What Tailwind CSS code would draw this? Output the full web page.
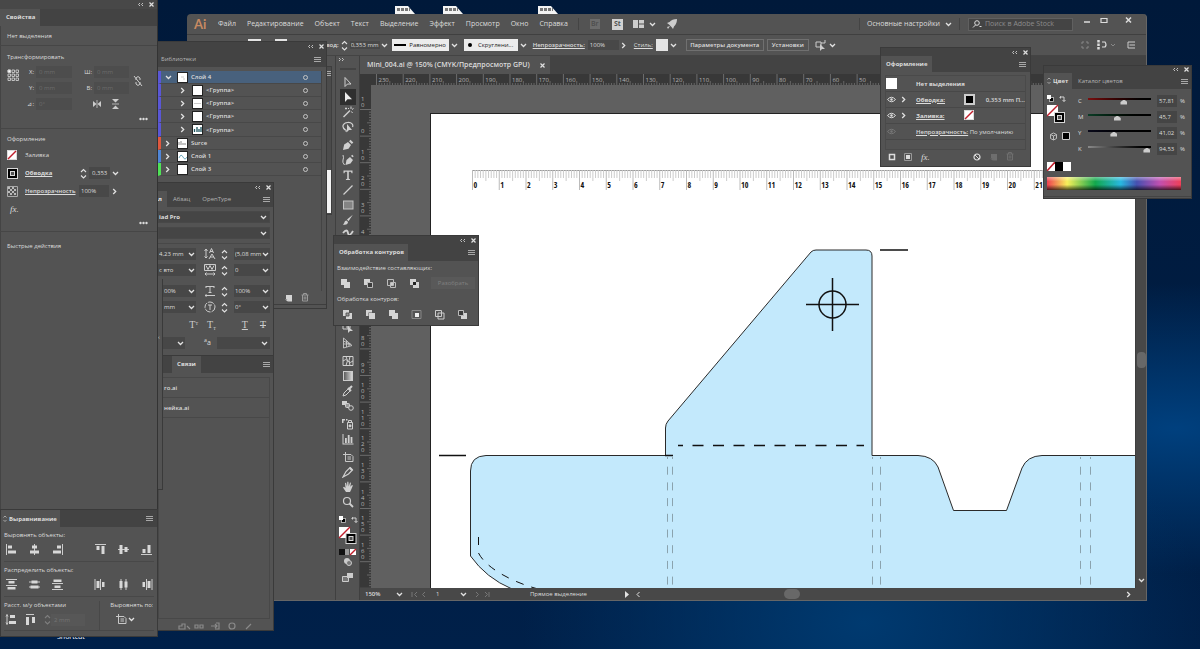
<!DOCTYPE html>
<html lang="ru">

<head>
  <meta charset="UTF-8" />
  <meta name="viewport" content="width=device-width, initial-scale=1" />
  <title>Mini_004.ai</title>
  <script src="https://cdn.jsdelivr.net/npm/@tailwindcss/browser@4"></script>
</head>

<body class="font-['Open_Sans','Noto_Sans',sans-serif] text-[6px] leading-[8px] text-[#dcdcdc]">

  <!-- Icon set -->
  <svg class="absolute size-0">
    <defs>
      <g id="down" fill="none" stroke="#e2e2e2" stroke-width="1.3"><path d="M1 2l2.5 2.5L6 2" /></g>
      <g id="right" fill="none" stroke="#e2e2e2" stroke-width="1.3"><path d="M2.2 1l2.5 2.5L2.2 6" /></g>
      <g id="left" fill="none" stroke="#e2e2e2" stroke-width="1"><path d="M4.5 1L2 3.5 4.5 6" /></g>
      <g id="menu" fill="none" stroke="#a8a8a8" stroke-width="1"><path d="M0 1.5h7M0 3.5h7M0 5.5h7" /></g>
      <g id="close" fill="none" stroke="#e0e0e0" stroke-width="1.2"><path d="M1.5 1.5l4 4M5.5 1.5l-4 4" /></g>
      <g id="fold" fill="none" stroke="#d0d0d0" stroke-width=".9"><path d="M3 2L1.5 3.5 3 5M6 2L4.5 3.5 6 5" /></g>
      <g id="unfold" fill="none" stroke="#d0d0d0" stroke-width=".9"><path d="M1 2l1.5 1.5L1 5M4 2l1.5 1.5L4 5" /></g>
      <g id="step" fill="none" stroke="#e2e2e2" stroke-width="1.1"><path d="M1 4l2.5-2.5L6 4M1 7.500l2.500 2.500L6 7.500" /></g>
      <g id="dots" fill="#dcdcdc"><circle cx="1.500" cy="2" r="1.200" /><circle cx="4.500" cy="2" r="1.200" /><circle cx="7.500" cy="2" r="1.200" /></g>
      <g id="tabmark" fill="none" stroke="#bdbdbd" stroke-width=".8"><path d="M.5 2.500L2 1l1.500 1.500M.5 5L2 6.500 3.500 5" /></g>
      <g id="eye"><path d="M.5 3.500Q4.500-1 8.500 3.500 4.500 8 .5 3.500z" fill="none" stroke="currentColor" /><circle cx="4.500" cy="3.500" r="1.200" fill="currentColor" /></g>
      <g id="none"><rect x=".5" y=".5" width="9" height="9" fill="#fff" stroke="#ddd" /><path d="M1 9L9 1" stroke="#c01f2c" stroke-width="1.500" /></g>
      <g id="stroke"><rect x=".5" y=".5" width="10" height="10" fill="#000" stroke="#d8d8d8" /><rect x="3.500" y="3.500" width="4" height="4" fill="#535353" stroke="#d8d8d8" /></g>
      <g id="swap" fill="none" stroke="#d0d0d0"><path d="M1.500 3.500v-2l-1 1M1 2h4v4.500M3.500 5L5 6.500 6.500 5" /></g>
      <g id="mini"><rect x="2.500" y="2.500" width="4" height="4" fill="#000" stroke="#c8c8c8" stroke-width=".8" /><rect width="4" height="4" fill="#fff" /></g>
      <g id="trash" fill="none" stroke="currentColor"><path d="M.5 2h7M2.500 2V.5h3V2M1.500 2v6h5V2M3.200 3.500v3M4.800 3.500v3" /></g>
      <g id="page" fill="currentColor"><path d="M1 1h6v6.500H4L1 4.500z" /><path d="M0 5.500h3.500v2.500z" /></g>
      <!-- tools -->
      <g id="t-select" fill="none" stroke="#d0d0d0"><path d="M3 1.500v9l2.500-2.500H9z" /></g>
      <g id="t-direct" fill="#ececec"><path d="M3 1v10l2.500-2.800H10z" /></g>
      <g id="t-wand" stroke="#d0d0d0" fill="none"><path d="M1.500 11L8 4.500" stroke-width="1.500" /><path d="M9 .5v2.500M6 2l1 1M11.500 2.500L10 3.500M9.500 5.500l1 1.500M3 2.500h2M4 1.500v2" /></g>
      <g id="t-lasso"><path d="M3.500 9C-1 6 1 2 5.500 1.500S11.500 4 10.500 6M2 8.500q3 0 2 2.500" fill="none" stroke="#d0d0d0" stroke-width="1.200" /><path d="M5 3v8l2-2h3z" fill="#d0d0d0" /></g>
      <g id="t-pen" fill="#d0d0d0"><path d="M1 11l1.200-5.500L6 3l3 3-2.500 3.800z" /><path d="M7 2.200L8.500.8l2.800 2.800-1.500 1.500z" /></g>
      <g id="t-curve"><path d="M3.500 11l1-5L8 3l3 3-2.500 3.500zM9 2l1.200-1.200 1.500 1.500-1 1z" fill="#d0d0d0" /><path d="M1 1q1 3 0 5t1.500 5" fill="none" stroke="#d0d0d0" /></g>
      <g id="t-type" fill="#d0d0d0"><path d="M1.500 1.500h9v2.700h-.9L9 2.700H6.800v7l1.300.5v.8H3.900v-.8l1.300-.5v-7H3l-.6 1.500h-.9z" /></g>
      <g id="t-line"><path d="M1.500 10.500l9-9" stroke="#d0d0d0" stroke-width="1.200" /></g>
      <g id="t-rect"><rect x="1.500" y="2" width="9.500" height="8" fill="#848484" stroke="#c4c4c4" /></g>
      <g id="t-brush" fill="#d0d0d0"><path d="M10.800.8L5 5.500l1.500 1.800zM4.500 6.500C2 6.500 3 9.500.8 10.500 4 11.500 6 10 6 8z" /></g>
      <g id="t-blob"><path d="M1 4q4-5 5 0t5-2" fill="none" stroke="#d0d0d0" stroke-width="1.800" /></g>
      <g id="t-shape"><path d="M1 2h5v5H1zM4 5h5" fill="none" stroke="#d0d0d0" /><path d="M6 4v7l2-2h3z" fill="#d0d0d0" /></g>
      <g id="t-persp" fill="none" stroke="#c8c8c8" stroke-width=".9"><path d="M1.500 1v10L10 8.500 1.500 1M1.500 4l7 3.500M1.500 7h7M4.500 3.500V10M7 6v3" /></g>
      <g id="t-mesh" fill="none" stroke="#d0d0d0"><path d="M1 1.500h10v9H1zM1 6q3-3 5 0t5 0M4 1.500q3 4 0 9M8 1.500q-2 4 0 9" /></g>
      <g id="t-drop"><path d="M1 11l1-3 4.500-4.500 2 2L4 10z" fill="none" stroke="#d0d0d0" /><path d="M6 3l3 3M7 4l3-3" stroke="#d0d0d0" stroke-width="2" /></g>
      <g id="t-blend"><path d="M0 1h5v4H0z" fill="#d0d0d0" /><rect x="3.500" y="3.500" width="4" height="4" rx="1" fill="#999" stroke="#d0d0d0" /><circle cx="9" cy="8" r="2.300" fill="#535353" stroke="#d0d0d0" /></g>
      <g id="t-spray"><path d="M5.500 4.500h5v6.500h-5zM6.500 4V2.500h3V4" fill="none" stroke="#d0d0d0" /><path d="M0 1h3v1.500H1.500V5H0zM4 1h1.500v1.500H4z" fill="#d0d0d0" /><circle cx="8" cy="7.700" r="1.500" fill="#d0d0d0" /></g>
      <g id="t-graph" fill="#d0d0d0"><path d="M.5 1h1v9.500h10v1H.5zM3 5h1.800v5H3zM5.800 2h1.800v8H5.800zM8.600 4h1.800v6H8.600z" /></g>
      <g id="t-board"><path d="M3.500 1v9.500h7.500v-5L9 3.500H1M5.500 6h3.500M5.500 8h3.500" fill="none" stroke="#c8c8c8" /></g>
      <g id="t-slice"><path d="M1 11l3-5.500 4-4 2.500 2.500-4 4z" fill="none" stroke="#d0d0d0" stroke-width="1.200" /><path d="M7 2.500L8.500 1 11 3.500 9.500 5z" fill="#d0d0d0" /></g>
      <g id="t-hand" fill="#d0d0d0"><path d="M4 11L1 6.500l1-.7L3.500 7 3 2l1-.3L5 5.500 5.300.8h1.100L6.700 5.500 8 1.500l1 .3-.7 4L10 4l.9.6L9 9l-1 2z" /></g>
      <g id="t-zoom"><circle cx="5" cy="5" r="3.500" fill="none" stroke="#d0d0d0" stroke-width="1.200" /><path d="M7.500 7.500L11 11" stroke="#d0d0d0" stroke-width="1.800" /></g>
      <linearGradient id="grad"><stop offset="0" stop-color="#555" /><stop offset="1" stop-color="#ddd" /></linearGradient>
      <g id="t-grad"><rect x="1.500" y="1.500" width="9" height="9" fill="url(#grad)" stroke="#ccc" /></g>
      <!-- align -->
      <g id="a-left"><path d="M1.500 1v11" stroke="#ccc" /><path d="M3 2.500h4v3H3zM3 7.500h8v3H3z" fill="#d8d8d8" /></g>
      <g id="a-center"><path d="M6.500 1v11" stroke="#ccc" /><path d="M4 2.500h5v3H4zM2 7.500h9v3H2z" fill="#d8d8d8" /></g>
      <g id="a-hspace"><path d="M1 1v11M6.500 1v11" stroke="#ccc" /><path d="M2.500 3h3v7h-3zM8 4h2.500v5H8z" fill="#d8d8d8" /></g>
      <g id="a-vspace"><path d="M1 1.500h11M1 7.500h11" stroke="#ccc" /><path d="M3.500 3h6v2.500h-6zM2.500 9h8v2.500h-8z" fill="#d8d8d8" /></g>
      <!-- pathfinder -->
      <g id="p-unite" fill="#d4d4d4"><path d="M1 1h6v3h3v6H4V7H1z" /></g>
      <g id="p-minus"><path d="M1 1h6v6H1z" fill="#d4d4d4" /><path d="M4.500 4.500h5v5h-5z" fill="#3c3c3c" stroke="#bbb" /></g>
      <g id="p-inter" fill="none" stroke="#bdbdbd"><path d="M1.500 1.500h6v6h-6zM4.500 4.500h5v5h-5z" /><path d="M5 5h2v2H5z" fill="#fff" /></g>
      <g id="p-excl"><path d="M1 1h6v6H1zM4 4h6v6H4z" fill="#d4d4d4" /><path d="M4 4h3v3H4z" fill="#222" /></g>
      <g id="p-back"><path d="M4 4h6v6H4z" fill="#d4d4d4" /><path d="M1.500 1.500h5v5h-5z" fill="#3c3c3c" stroke="#bbb" /></g>
      <g id="p-div"><path d="M1 1h6v6H1zM4 4h6v6H4z" fill="#d4d4d4" /><path d="M4 4h3v3H4z" fill="#999" stroke="#444" stroke-width=".8" /></g>
    </defs>
  </svg>

  <main class="relative min-h-screen overflow-hidden bg-[#001e43] bg-[radial-gradient(ellipse_at_72%_96%,#003a70_0%,transparent_28%),radial-gradient(ellipse_at_98%_66%,#00407e_0%,transparent_24%),linear-gradient(#00193a,#002049)]">

    <!-- Desktop files -->
    <div class="absolute left-[395px] top-[6px] flex">
      <svg class="mr-[28px] h-3 w-5"><path d="M0 0h13l7 8v4H0z" fill="#f4f4f4" /><path d="M2 3.500h13" stroke="#777" stroke-width="3" stroke-dasharray="3 1" /></svg>
      <svg class="mr-[75px] h-3 w-5"><path d="M0 0h13l7 8v4H0z" fill="#f4f4f4" /><path d="M2 3.500h13" stroke="#777" stroke-width="3" stroke-dasharray="3 1" /></svg>
      <svg class="h-3 w-5"><path d="M0 0h13l7 8v4H0z" fill="#f4f4f4" /><path d="M2 3.500h13" stroke="#777" stroke-width="3" stroke-dasharray="3 1" /></svg>
    </div>
    <span class="absolute left-[57px] top-[633px] text-[7px] text-white">Shortcut</span>

    <!-- Application window -->
    <section class="absolute bottom-12 left-[187px] right-[53px] top-[14px] flex flex-col rounded-t-sm border-b border-r border-[#666] bg-[#535353]">

      <!-- Menu bar -->
      <nav class="flex h-[21px] shrink-0 items-center border-b border-[#404040] pl-[7px] text-[7px]">
        <span class="w-6 font-['Lato'] text-[13px] font-bold leading-[16px] text-[#c88a62]">Ai</span>
        <div class="flex gap-[11px]">
          <a href="#">Файл</a>
          <a href="#">Редактирование</a>
          <a href="#">Объект</a>
          <a href="#">Текст</a>
          <a href="#">Выделение</a>
          <a href="#">Эффект</a>
          <a href="#">Просмотр</a>
          <a href="#">Окно</a>
          <a href="#">Справка</a>
        </div>
        <span class="ml-[10px] mr-[11px] h-3 border-l border-[#444]"></span>
        <span class="flex size-[10px] items-center justify-center bg-[#6c6c6c] text-[7px] font-semibold text-[#4d4d4d]">Br</span>
        <span class="ml-3 flex size-[11px] items-center justify-center bg-[#d2d2d2] text-[7px] font-bold text-[#555]">St</span>
        <svg class="ml-[10px] h-[8px] w-[11px]" fill="#ccc"><path d="M0 0h5v8H0zM6 0h5v3.500H6zM6 4.500h5V8H6z" /></svg>
        <svg class="ml-[5px] size-[7px]"><use href="#down" /></svg>
        <svg class="ml-[10px] size-3" fill="#ccc"><path d="M11 1Q6 1 3.500 4L1 5l2 1.500L5.500 9 7 11l1-2.500Q11 6 11 1zM1 9l3-1-2 3z" /></svg>
        <div class="ml-auto flex h-3 items-center border-x border-[#444] px-[7px]">
          <span>Основные настройки</span>
          <svg class="ml-[5px] size-[7px]"><use href="#down" /></svg>
        </div>
        <label class="ml-2 flex h-[13px] w-[105px] items-center border border-[#606060] bg-[#444] pl-[3px]">
          <svg class="h-2 w-[10px]" fill="none" stroke="#ddd"><circle cx="5" cy="3" r="2.300" /><path d="M3.500 5L1 7.500M7.500 6.500h2" /></svg>
          <input type="search" aria-label="Поиск" placeholder="Поиск в Adobe Stock" class="w-[86px] pl-[3px] text-[7px] placeholder:text-[#8c8c8c]" />
        </label>
        <button aria-label="Свернуть" class="ml-[10px] mt-[2px] self-start"><svg class="h-[9px] w-[9px]"><path d="M1 6h6" stroke="#ddd" stroke-width="1.500" /></svg></button>
        <button aria-label="Развернуть" class="ml-2 mt-[2px] self-start"><svg class="h-[9px] w-[9px]"><path d="M1 2.500h6v4H1z" fill="none" stroke="#ddd" stroke-width="1.200" /></svg></button>
        <button aria-label="Закрыть" class="ml-[15px] mr-[13px] mt-[2px] self-start"><svg class="h-[9px] w-[9px]"><path d="M2 1.500l5 5M7 1.500l-5 5" stroke="#ddd" stroke-width="1.500" /></svg></button>
      </nav>

      <!-- Control bar -->
      <div class="flex h-[21px] shrink-0 items-center border-b border-[#444] pl-[61px]">
        <span class="h-3 w-[13px] bg-[#e4e4e4]"></span>
        <span class="ml-[14px] h-3 w-3 border-2 border-[#e4e4e4] bg-black"></span>
        <span class="ml-[39px] font-semibold">вод:</span>
        <svg class="ml-[2px] h-[11px] w-[7px]"><use href="#step" /></svg>
        <label class="ml-[2px] flex items-center bg-[#484848]"><input aria-label="Толщина" value="0,353 mm" class="w-[30px] px-[1px]" /></label>
        <svg class="ml-[1px] size-[7px]"><use href="#down" /></svg>
        <button class="ml-[4px] flex h-3 w-[57px] items-center justify-center gap-[3px] bg-[#ececec] text-[#222]"><span class="w-3 border-t-2 border-black"></span>Равномерно</button>
        <svg class="ml-[2px] size-[7px]"><use href="#down" /></svg>
        <button class="ml-[6px] flex h-3 w-[54px] items-center justify-center gap-[6px] bg-[#ececec] text-[#222]"><span class="size-1 rounded-full bg-black"></span>Скруглени...</button>
        <svg class="ml-[2px] size-[7px]"><use href="#down" /></svg>
        <label for="ctl-opacity" class="ml-[6px] font-semibold underline">Непрозрачность:</label>
        <input id="ctl-opacity" value="100%" class="ml-[3px] h-[10px] w-[31px] bg-[#484848] px-[2px]" />
        <svg class="ml-[1px] size-[7px]"><use href="#right" /></svg>
        <span class="ml-[7px] underline">Стиль:</span>
        <span class="ml-[3px] size-3 bg-[#e4e4e4]"></span>
        <svg class="ml-[2px] size-[7px]"><use href="#down" /></svg>
        <button class="ml-[9px] h-3 w-[78px] border border-[#707070] font-semibold leading-[8px]">Параметры документа</button>
        <button class="ml-[3px] h-3 w-[42px] border border-[#707070] font-semibold leading-[8px]">Установки</button>
        <svg class="ml-[6px] h-[11px] w-3" fill="none" stroke="#ccc"><path d="M1 2h5v5H1zM6 3h4V0" /><path d="M5 4v7l2-2h3z" fill="#ccc" stroke="none" /></svg>
        <svg class="ml-[2px] size-[7px]"><use href="#down" /></svg>
        <svg class="ml-auto size-2"><path d="M1 3V1h2M5 1h2v2M7 5v2H5M3 7H1V5" fill="none" stroke="#888" /></svg>
        <svg class="ml-2 h-[10px] w-[18px]"><path d="M1.500 0v10" stroke="#ddd" stroke-width="2.500" stroke-dasharray="2.500 1" /><path d="M5 2h3q2 3 0 5H5" fill="none" stroke="#ddd" stroke-width="1.200" /><path d="M14 4l2 2 2-2" fill="none" stroke="#888" /></svg>
        <svg class="ml-3 mr-[11px] h-2 w-2"><path d="M1 1h7M2.500 4H8M1 7h7M1 1v6" fill="none" stroke="#ccc" /></svg>
      </div>

      <div class="flex min-h-0 flex-1">
        <div class="w-[148px] shrink-0"></div>

        <!-- Tools -->
        <aside class="flex w-[25px] shrink-0 flex-col items-center border-x border-[#404040]">
          <svg class="mr-3 h-2 w-[7px] shrink-0"><use href="#unfold" /></svg>
          <div class="mb-[6px] mt-[4px] h-[2px] w-4 shrink-0 border-y border-[#444]"></div>
          <div class="flex shrink-0 flex-col gap-[3px]">
            <div class="flex flex-col gap-[3px]">
              <svg class="size-3"><use href="#t-select" /></svg>
              <svg class="size-3 bg-[#2f2f2f] outline-2 outline-[#2f2f2f]"><use href="#t-direct" /></svg>
              <svg class="size-3"><use href="#t-wand" /></svg>
              <svg class="size-3"><use href="#t-lasso" /></svg>
            </div>
            <div class="mt-[3px] flex flex-col gap-[3px]">
              <svg class="size-3"><use href="#t-pen" /></svg>
              <svg class="size-3"><use href="#t-curve" /></svg>
              <svg class="size-3"><use href="#t-type" /></svg>
              <svg class="size-3"><use href="#t-line" /></svg>
              <svg class="size-3"><use href="#t-rect" /></svg>
              <svg class="size-3"><use href="#t-brush" /></svg>
              <svg class="size-3"><use href="#t-blob" /></svg>
            </div>
            <div class="mt-[3px] flex flex-col gap-[3px]">
              <svg class="size-3"><use href="#t-drop" /></svg>
              <svg class="size-3"><use href="#t-line" /></svg>
              <svg class="size-3"><use href="#t-rect" /></svg>
              <svg class="size-3"><use href="#t-mesh" /></svg>
              <svg class="size-3"><use href="#t-blend" /></svg>
              <svg class="size-3"><use href="#t-shape" /></svg>
              <svg class="size-3"><use href="#t-persp" /></svg>
            </div>
            <div class="mt-[3px] flex flex-col gap-[3px]">
              <svg class="size-3"><use href="#t-mesh" /></svg>
              <svg class="size-3"><use href="#t-grad" /></svg>
              <svg class="size-3"><use href="#t-drop" /></svg>
              <svg class="size-3"><use href="#t-blend" /></svg>
            </div>
            <div class="mt-[3px] flex flex-col gap-[3px]">
              <svg class="size-3"><use href="#t-spray" /></svg>
              <svg class="size-3"><use href="#t-graph" /></svg>
            </div>
            <div class="mt-[3px] flex flex-col gap-[3px]">
              <svg class="size-3"><use href="#t-board" /></svg>
              <svg class="size-3"><use href="#t-slice" /></svg>
              <svg class="size-3"><use href="#t-hand" /></svg>
              <svg class="size-3"><use href="#t-zoom" /></svg>
            </div>
          </div>
          <svg class="mt-[7px] h-[72px] w-[22px] shrink-0">
            <use href="#mini" x="2" y="1" /><use href="#swap" x="14" y="1" />
            <g transform="translate(2 12)"><path d="M0 0h11v11H0z" fill="#fff" /><path d="M0 11L11 0" stroke="#c01f2c" stroke-width="1.500" /></g>
            <use href="#stroke" x="8.500" y="18" />
            <path d="M2 34h6v6H2z" fill="#111" /><path d="M8 34h4v6H8z" fill="#999" />
            <g transform="translate(13 34)"><path d="M0 0h6v6H0z" fill="#fff" /><path d="M0 6L6 0" stroke="#c01f2c" stroke-width="1.500" /></g>
            <circle cx="10" cy="46" r="3" fill="#ccc" /><circle cx="12" cy="48" r="2.500" fill="#777" stroke="#ccc" />
            <path d="M5.500 61.500h6v5h-6z" fill="#777" stroke="#ccc" /><path d="M10 58h6v5h-6z" fill="#ccc" />
          </svg>
        </aside>

        <!-- Document -->
        <div class="flex min-w-0 flex-1 flex-col">
          <div class="flex h-[18px] shrink-0 bg-[#434343]">
            <div class="flex items-center gap-[9px] bg-[#535353] pl-[7px] pr-1 text-[7px] font-semibold">
              <span>Mini_004.ai @ 150% (CMYK/Предпросмотр GPU)</span>
              <button aria-label="Закрыть документ"><svg class="size-[7px]"><use href="#close" /></svg></button>
            </div>
          </div>
          <svg id="rulerTop" class="h-[11px] w-full shrink-0 bg-[#383838]" fill="#b4b4b4" stroke-width="1"></svg>
          <div class="flex min-h-0 flex-1">
            <svg id="rulerLeft" class="h-full w-[11px] shrink-0 bg-[#383838]" fill="#b4b4b4"></svg>
            <div class="min-w-0 flex-1 bg-[#606060]">
              <svg class="h-full w-full" viewBox="371 85 764 503" preserveAspectRatio="xMinYMin slice">
                <rect x="430.500" y="113.500" width="900" height="700" fill="#fff" stroke="#222" />
                <g id="scale" stroke="#b5b5b5" font-family="'Open Sans Condensed','Roboto Condensed','Roboto',sans-serif" font-size="8" font-weight="bold"></g>
                <path d="M1140 455.500H1042Q1027 456 1022 468L1006.500 510.500H953.500L938 467Q933 456 918 455.500H872V256Q872 250 866 250H816Q813 250 811 252L668 421Q665.500 424 665.500 428V455.500H486Q470.500 456 470.500 471V556Q486 578 512 589L530 600H1140z" fill="#c3e9fc" stroke="#2a2a2a" />
                <g stroke="#111" fill="none" stroke-width="1.500">
                  <path d="M439 455.500h27M665 455.500h8M880 250h28M806 304.500h53M832.500 278v53" />
                  <circle cx="832.500" cy="304.500" r="13.500" />
                  <path d="M678 445.500H864" stroke-dasharray="11 9.500" stroke-dashoffset="6" />
                  <path d="M478.500 537V553C486 568 512 582 538 589" stroke-width="1" stroke-dasharray="8 8" />
                </g>
                <path d="M667.500 457V588M672.500 457V588M872.500 457V588M880.500 457V588M1080.500 457V588M1090.500 457V588" fill="none" stroke="#8ba3ae" stroke-dasharray="8 7.700" stroke-dashoffset="6" />
              </svg>
            </div>
            <div class="flex w-[11px] shrink-0 flex-col items-center border-l border-[#3e3e3e] bg-[#484848]">
              <span class="mt-[267px] h-4 w-[9px] rounded-sm bg-[#686868]"></span>
              <svg class="mb-1 mt-auto size-[7px]"><use href="#down" /></svg>
            </div>
          </div>
          <!-- Status bar -->
          <div class="flex h-3 shrink-0 items-center bg-[#484848]">
            <span class="w-9 pl-[5px] font-semibold">150%</span>
            <svg class="size-[7px]"><use href="#down" /></svg>
            <svg class="ml-[8px] h-[7px] w-[16px]"><path d="M1 1v5M6 1L3.500 3.500 6 6M14 1l-2.500 2.500L14 6" fill="none" stroke="#777" /></svg>
            <span class="ml-[9px] w-6">1</span>
            <svg class="size-[7px]"><use href="#down" /></svg>
            <svg class="ml-[8px] h-[7px] w-[16px]"><path d="M1 1l2.500 2.500L1 6M10 1l2.500 2.500L10 6M14 1v5" fill="none" stroke="#777" /></svg>
            <span class="ml-[39px] w-[94px]">Прямое выделение</span>
            <svg class="size-[7px]"><path d="M1 0l4 3.500L1 7z" fill="#e2e2e2" /></svg>
            <svg class="ml-[4px] size-[7px]"><use href="#left" /></svg>
            <span class="ml-[142px] h-[10px] w-4 rounded-full bg-[#686868]"></span>
            <svg class="ml-auto mr-[14px] size-[7px]"><use href="#right" /></svg>
          </div>
        </div>
      </div>
    </section>

    <!-- Panel behind the layers -->
    <div class="absolute left-[310px] top-[66px] flex h-[149px] w-[22px] justify-end border border-[#3e3e3e] bg-[#4b4b4b]">
      <svg class="absolute right-0 top-[3px] size-[7px]"><use href="#menu" /></svg>
      <span class="mt-[103px] h-[43px] w-[6px] bg-[#f4f4f4]"></span>
    </div>

    <!-- Layers -->
    <section class="absolute left-[150px] top-[41px] h-[268px] w-[177px] border border-[#3a3a3a] bg-[#535353] pl-[7px]">
      <div class="flex h-[9px] items-center justify-end gap-1 bg-[#434343] pr-[1px]">
        <svg class="size-[7px]"><use href="#fold" /></svg>
        <button aria-label="Закрыть слои"><svg class="size-[7px]"><use href="#close" /></svg></button>
      </div>
      <div class="flex h-4 items-center justify-between bg-[#434343] pl-[3px] pr-[5px]">
        <span class="text-[#b5b5b5]">Библиотеки</span>
        <svg class="size-[7px]"><use href="#menu" /></svg>
      </div>
      <ul class="mr-[4px] mt-[4px] h-[220px] border-r border-[#444]">
        <li class="flex h-[13px] items-center border-b border-l-[3px] border-[#484848] border-l-[#5a57d6] bg-[#48617d] pl-1 font-semibold">
          <svg class="size-[7px]"><use href="#down" /></svg>
          <svg class="ml-[5px] size-[11px] border border-[#222] bg-white"><path d="M3 4h3M5 6h2" stroke="#ccc" /></svg>
          <span class="ml-[3px]">Слой 4</span><span class="ml-auto mr-[13px] size-[5px] rounded-full border border-[#c4c4c4]"></span>
        </li>
        <li class="flex h-[13px] items-center border-b border-l-[3px] border-[#484848] border-l-[#5a57d6] pl-[18px] font-semibold">
          <svg class="size-[7px]"><use href="#right" /></svg>
          <svg class="ml-[6px] size-[11px] border border-[#222] bg-white"></svg>
          <span class="ml-[3px]">&lt;Группа&gt;</span><span class="ml-auto mr-[13px] size-[5px] rounded-full border border-[#c4c4c4]"></span>
        </li>
        <li class="flex h-[13px] items-center border-b border-l-[3px] border-[#484848] border-l-[#5a57d6] pl-[18px] font-semibold">
          <svg class="size-[7px]"><use href="#right" /></svg>
          <svg class="ml-[6px] size-[11px] border border-[#222] bg-white"><path d="M1 4.500h7" stroke="#ccc" /></svg>
          <span class="ml-[3px]">&lt;Группа&gt;</span><span class="ml-auto mr-[13px] size-[5px] rounded-full border border-[#c4c4c4]"></span>
        </li>
        <li class="flex h-[13px] items-center border-b border-l-[3px] border-[#484848] border-l-[#5a57d6] pl-[18px] font-semibold">
          <svg class="size-[7px]"><use href="#right" /></svg>
          <svg class="ml-[6px] size-[11px] border border-[#222] bg-white"></svg>
          <span class="ml-[3px]">&lt;Группа&gt;</span><span class="ml-auto mr-[13px] size-[5px] rounded-full border border-[#c4c4c4]"></span>
        </li>
        <li class="flex h-[14px] items-center border-b border-l-[3px] border-[#484848] border-l-[#5a57d6] pl-[18px] font-semibold">
          <svg class="size-[7px]"><use href="#right" /></svg>
          <svg class="ml-[6px] size-[11px] border border-[#222] bg-white"><path d="M1.500 4v3M4 2v5M6 4v3M8 2v5" stroke="#1e5560" stroke-width="1.300" /></svg>
          <span class="ml-[3px]">&lt;Группа&gt;</span><span class="ml-auto mr-[13px] size-[5px] rounded-full border border-[#c4c4c4]"></span>
        </li>
        <li class="flex h-[13px] items-center border-b border-l-[3px] border-[#484848] border-l-[#e0583e] pl-[3px] font-semibold">
          <svg class="size-[7px]"><use href="#right" /></svg>
          <svg class="ml-[6px] size-[11px] border border-[#222] bg-white"><path d="M1 6V3M3 6V2M5 6V4M7 6V4" stroke="#888" /></svg>
          <span class="ml-[3px]">Surce</span><span class="ml-auto mr-[13px] size-[5px] rounded-full border border-[#c4c4c4]"></span>
        </li>
        <li class="flex h-[13px] items-center border-b border-l-[3px] border-[#484848] border-l-[#4f86d8] pl-[3px] font-semibold">
          <svg class="size-[7px]"><use href="#right" /></svg>
          <svg class="ml-[6px] size-[11px] border border-[#222] bg-white"><path d="M1 6q2-5 4-1t4 0" fill="none" stroke="#6ea9bd" /></svg>
          <span class="ml-[3px]">Слой 1</span><span class="ml-auto mr-[13px] size-[5px] rounded-full border border-[#c4c4c4]"></span>
        </li>
        <li class="flex h-[13px] items-center border-b border-l-[3px] border-[#484848] border-l-[#4fe356] pl-[3px] font-semibold">
          <svg class="size-[7px]"><use href="#right" /></svg>
          <svg class="ml-[6px] size-[11px] border border-[#222] bg-white"></svg>
          <span class="ml-[3px]">Слой 3</span><span class="ml-auto mr-[13px] size-[5px] rounded-full border border-[#c4c4c4]"></span>
        </li>
      </ul>
      <div class="flex h-[14px] items-center justify-end gap-2 border-b border-[#3e3e3e] pr-[17px] text-[#d4d4d4]">
        <svg class="size-2"><use href="#page" /></svg>
        <svg class="h-[9px] w-2 text-[#999]"><use href="#trash" /></svg>
      </div>
    </section>

    <!-- Character + links -->
    <section class="absolute left-[150px] top-[182px] h-[449px] w-[124px] border border-[#3a3a3a] bg-[#535353] pl-[7px]">
      <div class="flex h-2 items-center justify-end gap-1 bg-[#434343] pr-[1px]">
        <svg class="size-[7px]"><use href="#fold" /></svg>
        <button aria-label="Закрыть символ"><svg class="size-[7px]"><use href="#close" /></svg></button>
      </div>
      <div class="flex h-4 items-stretch bg-[#434343] leading-[16px] text-[#b5b5b5]">
        <span class="w-[9px] bg-[#535353] font-bold text-[#eee]">л</span>
        <span class="ml-[6px]">Абзац</span>
        <span class="ml-3">OpenType</span>
        <svg class="ml-auto mr-[3px] size-[7px] self-center"><use href="#menu" /></svg>
      </div>
      <div class="mr-[3px] mt-1 flex h-3 items-center border border-[#484848] bg-[#454545]">
        <select aria-label="Шрифт" class="w-full appearance-none font-bold"><option>iad Pro</option></select>
        <svg class="mr-[2px] size-[7px] shrink-0"><use href="#down" /></svg>
      </div>
      <div class="mr-[3px] mt-1 flex h-3 items-center border border-[#484848] bg-[#454545]">
        <select aria-label="Начертание" class="w-full appearance-none"><option></option></select>
        <svg class="mr-[2px] size-[7px] shrink-0"><use href="#down" /></svg>
      </div>
      <div class="mr-[3px] mt-[4px] grid grid-cols-[38px_13px_9px_1fr] items-center gap-x-1 gap-y-1 border-t border-[#484848] pt-[4px]">
        <label class="flex h-3 items-center bg-[#474747]"><input aria-label="Кегль" value="4,23 mm" class="w-[28px] pl-[1px]" /><svg class="ml-auto mr-[1px] size-[7px]"><use href="#down" /></svg></label>
        <svg class="ml-1 size-3" fill="none" stroke="#ccc"><path d="M2 1v9M.5 3L2 1l1.500 2M.5 8.500L2 10l1.500-1.500M5.500 5L7.500.5 9.500 5M6 3.500h3M5 11l3-5 3 5M6 9h4" /></svg>
        <svg class="ml-1 h-[11px] w-[7px]"><use href="#step" /></svg>
        <label class="ml-1 flex h-3 items-center bg-[#474747]"><input aria-label="Интерлиньяж" value="(5,08 mm" class="w-[28px] pl-[1px]" /><svg class="ml-auto mr-[1px] size-[7px] shrink-0"><use href="#down" /></svg></label>

        <label class="flex h-3 items-center bg-[#474747]"><input aria-label="Кернинг" value="с вто" class="w-[27px] pl-[1px]" /><svg class="ml-auto mr-[1px] size-[7px]"><use href="#down" /></svg></label>
        <svg class="ml-1 size-3" fill="none" stroke="#ccc"><path d="M.5.500h11v6H.5zM2 1.500l2 4 2-4 2 4 2-4M1 10h10M2.500 8.500L1 10l1.500 1.500M9.500 8.500L11 10l-1.500 1.500" /></svg>
        <svg class="ml-1 h-[11px] w-[7px]"><use href="#step" /></svg>
        <label class="ml-1 flex h-3 items-center bg-[#474747]"><input aria-label="Трекинг" value="0" class="w-[28px] pl-[1px]" /><svg class="ml-auto mr-[1px] size-[7px] shrink-0"><use href="#down" /></svg></label>

        <label class="mt-[5px] flex h-3 items-center bg-[#474747] pl-[5px]"><input aria-label="Масштаб по вертикали" value="00%" class="w-[22px] pl-[1px]" /><svg class="ml-auto mr-[1px] size-[7px]"><use href="#down" /></svg></label>
        <svg class="ml-1 mt-[5px] size-3" fill="none" stroke="#ccc"><path d="M2 1.500h8M6 1v6.500M4.500 7.500h3M2 1v2M10 1v2M1 10.500h10M2.500 9.500L1 10.500l1.500 1" /></svg>
        <svg class="ml-1 mt-[5px] h-[11px] w-[7px]"><use href="#step" /></svg>
        <label class="ml-1 mt-[5px] flex h-3 items-center bg-[#474747]"><input aria-label="Масштаб по горизонтали" value="100%" class="w-[28px] pl-[1px]" /><svg class="ml-auto mr-[1px] size-[7px] shrink-0"><use href="#down" /></svg></label>

        <label class="flex h-3 items-center bg-[#474747] pl-[5px]"><input aria-label="Сдвиг" value="mm" class="w-[22px] pl-[1px]" /><svg class="ml-auto mr-[1px] size-[7px]"><use href="#down" /></svg></label>
        <svg class="ml-1 size-3" fill="none" stroke="#ccc"><circle cx="6" cy="6" r="5" stroke-dasharray="6 1" /><path d="M4 4h4M6 4v5" /></svg>
        <svg class="ml-1 h-[11px] w-[7px]"><use href="#step" /></svg>
        <label class="ml-1 flex h-3 items-center bg-[#474747]"><input aria-label="Поворот" value="0°" class="w-[28px] pl-[1px]" /><svg class="ml-auto mr-[1px] size-[7px] shrink-0"><use href="#down" /></svg></label>
      </div>
      <div class="mr-[7px] mt-[4px] flex h-4 items-center justify-end font-['Liberation_Serif',serif] text-[10px] text-[#ccc]">
        <span>T<sup class="text-[6px]">т</sup></span><span class="ml-[9px]">T<sub class="text-[6px]">т</sub></span>
        <span class="ml-[26px] underline">T</span><span class="ml-[12px] line-through">T</span>
      </div>
      <div class="mr-[3px] mt-[4px] flex h-3 items-center">
        <div class="flex h-3 w-[27px] items-center justify-end bg-[#474747]"><svg class="mr-[1px] size-[7px]"><use href="#down" /></svg></div>
        <span class="ml-[19px] w-[13px] text-[7px]"><sup>a</sup>a</span>
        <div class="flex h-3 flex-1 items-center justify-end bg-[#474747]"><svg class="mr-[2px] size-[7px]"><use href="#down" /></svg></div>
      </div>

      <div class="mt-[6px] flex h-[18px] items-stretch border-t border-[#3a3a3a] bg-[#434343] font-bold leading-[17px]">
        <span class="ml-[14px] w-[29px] bg-[#535353] text-center">Связи</span>
        <svg class="ml-auto mr-[3px] size-[7px] self-center"><use href="#menu" /></svg>
      </div>
      <ul class="mr-[3px] mt-[4px] h-[242px] border border-[#484848]">
        <li class="h-[20px] border-b border-[#484848] pl-[5px] font-semibold leading-[20px]">го.ai</li>
        <li class="h-[20px] border-b border-[#484848] pl-[5px] font-semibold leading-[20px]">нейка.ai</li>
      </ul>
      <svg class="ml-[20px] mt-[3px] h-2 w-[75px]" fill="none" stroke="#8a8a8a" stroke-width="1.200"><path d="M1 7V4h3V2h3v5zM9 4l3 3M17 3h3v3h-3zM22 3h3v3h-3zM33 4h6M37 2l2 2-2 2M38 1h3v6h-4M57 4q0-3-3-3t-3 3 3 3 3-3M68 7l5-5" /></svg>
    </section>
    <div class="absolute left-[157px] top-[279px] h-[211px] w-[6px] border-b border-r border-[#3a3a3a] bg-[#535353] pl-[1px] pt-[54px]">‹</div>

    <!-- Properties -->
    <section class="absolute left-0 top-0 h-[510px] w-[158px] border-r border-[#333] bg-[#535353] shadow-[inset_1px_0_#444]">
      <div class="flex h-[9px] items-center justify-end gap-1 bg-[#484848] pr-[2px]">
        <svg class="size-[7px]"><use href="#fold" /></svg>
        <button aria-label="Закрыть свойства"><svg class="size-[7px]"><use href="#close" /></svg></button>
      </div>
      <div class="flex h-[17px] bg-[#434343]"><h2 class="w-10 bg-[#535353] pl-[6px] font-bold leading-[17px]">Свойства</h2></div>
      <p class="h-5 border-b border-[#464646] pl-[7px] leading-[21px]">Нет выделения</p>

      <div class="h-[83px] border-b border-[#464646] pl-[7px] pt-[7px]">
        <h3>Трансформировать</h3>
        <div class="mt-[5px] flex">
          <svg class="mt-[3px] size-[13px]" fill="none" stroke="#ccc" stroke-width=".9"><path d="M1 1h2.500v2.500H1zM5 1h2.500v2.500H5zM9 1h2.500v2.500H9zM1 5h2.500v2.500H1zM5 5h2.500v2.500H5zM9 5h2.500v2.500H9zM1 9h2.500v2.500H1zM5 9h2.500v2.500H5zM9 9h2.500v2.500H9z" /><path d="M1 1h2.500v2.500H1z" fill="#fff" /></svg>
          <div class="grid grid-cols-[12px_36px_18px_35px] items-center gap-x-[2px] gap-y-1 pl-[2px] text-right">
            <label for="px">X:</label><input id="px" value="0 mm" class="h-3 bg-[#4d4d4d] px-[3px] text-[#6c6c6c]" />
            <label for="pw">Ш:</label><input id="pw" value="0 mm" class="h-3 bg-[#4d4d4d] px-[3px] text-[#6c6c6c]" />
            <label for="py">Y:</label><input id="py" value="0 mm" class="h-3 bg-[#4d4d4d] px-[3px] text-[#6c6c6c]" />
            <label for="ph">В:</label><input id="ph" value="0 mm" class="h-3 bg-[#4d4d4d] px-[3px] text-[#6c6c6c]" />
            <label for="pa">⊿:</label>
            <select id="pa" class="h-3 appearance-none bg-[#4d4d4d] px-[3px] text-[#6c6c6c]"><option>0°</option></select>
            <svg class="col-span-2 ml-[18px] h-3 w-[30px]" fill="#ccc"><path d="M1 3l3.500 3L1 9zM9 3L5.500 6 9 9zM20 1h7l-3.500 3.500zM20 11h7l-3.500-3.500z" /><path d="M5 2v8M20 6h7" stroke="#ccc" stroke-width=".8" /></svg>
          </div>
          <svg class="ml-[4px] mt-[9px] h-3 w-[10px]" fill="none" stroke="#ccc"><path d="M3 5V3q2-3 4 0v2M3 7v2q2 3 4 0V7M1 1l8 10" /></svg>
        </div>
        <svg class="ml-[132px] mt-[7px] h-1 w-[9px]"><use href="#dots" /></svg>
      </div>

      <div class="h-[103px] border-b border-[#464646] pl-[7px] pt-[6px]">
        <h3>Оформление</h3>
        <div class="mt-[3px] flex h-[18px] items-center"><svg class="size-[11px]"><use href="#none" /></svg><span class="ml-[7px]">Заливка</span></div>
        <div class="flex h-[18px] items-center">
          <svg class="size-[11px]"><use href="#stroke" /></svg>
          <label for="pstroke" class="ml-[7px] w-[55px] font-bold underline">Обводка</label>
          <svg class="h-[11px] w-[7px]"><use href="#step" /></svg>
          <input id="pstroke" value="0,353" class="ml-[2px] h-3 w-[21px] bg-[#484848] pl-[3px]" />
          <svg class="ml-[2px] size-[7px]"><use href="#down" /></svg>
        </div>
        <div class="flex h-[18px] items-center">
          <svg class="size-[11px]" fill="#bbb"><path d="M.5.500h10v10H.5z" fill="none" stroke="#aaa" /><path d="M1 1h2v2H1zM5 1h2v2H5zM3 3h2v2H3zM7 3h2v2H7zM1 5h2v2H1zM5 5h2v2H5zM3 7h2v2H3zM7 7h2v2H7z" /></svg>
          <label for="popacity" class="ml-[7px] w-[54px] font-semibold underline">Непрозрачность</label>
          <input id="popacity" value="100%" class="h-3 w-[30px] bg-[#484848] pl-[2px]" />
          <svg class="ml-[2px] size-[7px]"><use href="#right" /></svg>
        </div>
        <div class="flex h-[17px] items-center pl-[3px] font-['Liberation_Serif',serif] text-[9px] italic">fx.</div>
        <svg class="ml-[132px] mt-[4px] h-1 w-[9px]"><use href="#dots" /></svg>
      </div>
      <h3 class="pl-[7px] pt-[10px]">Быстрые действия</h3>
    </section>

    <!-- Align -->
    <section class="absolute left-0 top-[509px] h-[128px] w-[158px] border border-[#3a3a3a] bg-[#535353]">
      <div class="flex h-[17px] items-center bg-[#434343] pr-1">
        <h2 class="flex h-full w-[59px] items-center gap-[2px] bg-[#535353] pl-[2px] font-bold"><svg class="h-2 w-1 shrink-0"><use href="#tabmark" /></svg>Выравнивание</h2>
        <svg class="ml-auto size-[7px]"><use href="#menu" /></svg>
      </div>
      <div class="mx-[3px] h-[35px] border-b border-[#484848] pt-[4px]">
        <h3>Выровнять объекты:</h3>
        <div class="flex pl-[1px] pt-[4px]">
          <svg class="size-[13px]"><use href="#a-left" /></svg>
          <svg class="ml-[10px] size-[13px]"><use href="#a-center" /></svg>
          <svg class="ml-[10px] size-[13px] -scale-x-100"><use href="#a-left" /></svg>
          <svg class="ml-[30px] size-[13px] rotate-90 -scale-y-100"><use href="#a-left" /></svg>
          <svg class="ml-[10px] size-[13px] rotate-90"><use href="#a-center" /></svg>
          <svg class="ml-[10px] size-[13px] -rotate-90"><use href="#a-left" /></svg>
        </div>
      </div>
      <div class="mx-[3px] h-[35px] border-b border-[#484848] pt-[4px]">
        <h3>Распределить объекты:</h3>
        <div class="flex pl-[1px] pt-[4px]">
          <svg class="size-[13px]"><use href="#a-vspace" /></svg>
          <svg class="ml-[10px] size-[13px]"><path d="M1 4h11M1 9h11" stroke="#ccc" /><path d="M3.500 2.500h6v3h-6zM2.500 7.500h8v3h-8z" fill="#d8d8d8" /></svg>
          <svg class="ml-[10px] size-[13px] -scale-y-100"><use href="#a-vspace" /></svg>
          <svg class="ml-[30px] size-[13px]"><use href="#a-hspace" /></svg>
          <svg class="ml-[10px] size-[13px]"><path d="M4 1v11M9 1v11" stroke="#ccc" /><path d="M2.500 3h3v7h-3zM7.500 3.500h3v6h-3z" fill="#d8d8d8" /></svg>
          <svg class="ml-[10px] size-[13px] -scale-x-100"><use href="#a-hspace" /></svg>
        </div>
      </div>
      <div class="mx-[3px] flex h-[34px] border-b border-[#484848] pt-[4px]">
        <div class="w-[97px] border-r border-[#484848]">
          <h3>Расст. м/у объектами</h3>
          <div class="flex items-center pl-[1px] pt-[4px]">
            <svg class="size-[13px]"><path d="M2 1v11M1 3.500L2 2l1 1.500M1 9.500L2 11l1-1.500" fill="none" stroke="#ccc" /><path d="M5 2h5v3H5zM4 8h7v3H4z" fill="#d8d8d8" /></svg>
            <svg class="ml-[6px] size-[13px]"><path d="M2 1.500h8" stroke="#ccc" /><path d="M2 4h3v8H2zM8 4h3v6H8z" fill="#d8d8d8" /></svg>
            <svg class="ml-[7px] h-[11px] w-[7px] opacity-30"><use href="#step" /></svg>
            <input aria-label="Интервал" value="2 mm" class="h-3 w-[34px] bg-[#575757] px-[3px] text-[#757575]" />
          </div>
        </div>
        <div class="w-[54px] pl-[10px]">
          <h3 class="w-[43px] overflow-hidden whitespace-nowrap">Выровнять по:</h3>
          <div class="flex items-center gap-[1px] pl-[5px] pt-[4px]">
            <svg class="size-3"><use href="#t-board" /></svg>
            <svg class="size-[7px]"><use href="#down" /></svg>
          </div>
        </div>
      </div>
    </section>

    <!-- Pathfinder -->
    <section class="absolute left-[333px] top-[235px] h-[91px] w-[146px] border border-[#3a3a3a] bg-[#535353]">
      <div class="flex h-2 items-center justify-end gap-1 bg-[#434343] pr-[1px]">
        <svg class="size-[7px]"><use href="#fold" /></svg>
        <button aria-label="Закрыть обработку контуров"><svg class="size-[7px]"><use href="#close" /></svg></button>
      </div>
      <div class="flex h-[17px] items-center bg-[#434343] pr-[3px]">
        <h2 class="w-[74px] bg-[#535353] pl-[5px] font-bold leading-[17px]">Обработка контуров</h2>
        <svg class="ml-auto size-[7px]"><use href="#menu" /></svg>
      </div>
      <div class="px-[3px] pt-[3px]">
        <h3>Взаимодействие составляющих:</h3>
        <div class="mt-[3px] flex h-4 items-center pl-[3px]">
          <svg class="size-[11px]"><use href="#p-unite" /></svg>
          <svg class="ml-3 size-[11px]"><use href="#p-minus" /></svg>
          <svg class="ml-3 size-[11px]"><use href="#p-inter" /></svg>
          <svg class="ml-3 size-[11px]"><use href="#p-excl" /></svg>
          <button class="ml-auto h-3 w-[44px] bg-[#595959] leading-[10px] text-[#808080]">Разобрать</button>
        </div>
        <h3 class="mt-[4px]">Обработка контуров:</h3>
        <div class="mt-[3px] flex h-4 items-center gap-3 pl-[5px]">
          <svg class="size-[11px]"><use href="#p-div" /></svg>
          <svg class="size-[11px]"><path d="M1 1h6v2.500H3.500V7H1zM4 4h6v6H4z" fill="#d4d4d4" /></svg>
          <svg class="size-[11px]"><use href="#p-unite" /></svg>
          <svg class="size-[11px]"><path d="M1 1.500h9v8H1z" fill="none" stroke="#888" /><path d="M4 4h4v4H4z" fill="#eee" /></svg>
          <svg class="size-[11px]"><path d="M1.500 1.500h6v6h-6zM4 4h6v6H4z" fill="none" stroke="#ccc" /></svg>
          <svg class="size-[11px]"><use href="#p-back" /></svg>
        </div>
      </div>
    </section>

    <!-- Appearance -->
    <section class="absolute right-[169px] top-[47px] h-[120px] w-[151px] border border-[#3a3a3a] bg-[#535353]">
      <div class="flex h-[8px] items-center justify-end gap-1 bg-[#434343] pr-[1px]">
        <svg class="size-[7px]"><use href="#fold" /></svg>
        <button aria-label="Закрыть оформление"><svg class="size-[7px]"><use href="#close" /></svg></button>
      </div>
      <div class="flex h-4 items-center bg-[#434343] pr-1">
        <h2 class="w-[51px] bg-[#535353] pl-[5px] font-bold leading-[16px]">Оформление</h2>
        <svg class="ml-auto size-[7px]"><use href="#menu" /></svg>
      </div>
      <div class="mx-1 mt-[3px] h-[75px] border border-[#4a4a4a]">
        <div class="flex h-4 items-center border-b border-[#484848]"><span class="size-[11px] bg-white"></span><b class="ml-[19px]">Нет выделения</b></div>
        <div class="flex h-4 items-center border-b border-[#484848]">
          <svg class="ml-[1px] h-[7px] w-[9px]"><use href="#eye" /></svg>
          <svg class="ml-[4px] size-[7px]"><use href="#right" /></svg>
          <b class="ml-[9px] w-[48px] underline">Обводка:</b>
          <svg class="size-[11px]"><path d="M0 0h11v11H0z" fill="#ccc" /><path d="M2 2h7v7H2z" /></svg>
          <span class="ml-auto font-semibold">0,353 mm П...</span>
        </div>
        <div class="flex h-4 items-center border-b border-[#484848]">
          <svg class="ml-[1px] h-[7px] w-[9px]"><use href="#eye" /></svg>
          <svg class="ml-[4px] size-[7px]"><use href="#right" /></svg>
          <b class="ml-[9px] w-[48px] underline">Заливка:</b>
          <svg class="size-[11px]"><use href="#none" /></svg>
        </div>
        <div class="flex h-4 items-center border-b border-[#484848]">
          <svg class="ml-[1px] h-[7px] w-[9px] text-[#777]"><use href="#eye" /></svg>
          <p class="ml-5 whitespace-nowrap"><span class="font-semibold underline">Непрозрачность:</span> По умолчанию</p>
        </div>
      </div>
      <div class="flex h-[13px] items-center pl-[7px] pr-[16px]">
        <svg class="size-2"><path d="M1.500 1.500h5v5h-5z" fill="none" stroke="#ddd" stroke-width="1.500" /></svg>
        <svg class="ml-2 size-2"><path d="M.5.500h7v7h-7z" fill="none" stroke="#999" /><path d="M2 2h4v4H2z" fill="#ddd" /></svg>
        <span class="ml-[9px] font-['Liberation_Serif',serif] text-[9px] italic">fx.</span>
        <svg class="ml-auto size-2"><circle cx="4" cy="4" r="3" fill="none" stroke="#ddd" stroke-width="1.200" /><path d="M2 2l4 4" stroke="#ddd" /></svg>
        <svg class="ml-[9px] size-2 text-[#6e6e6e]"><use href="#page" /></svg>
        <svg class="ml-2 h-[9px] w-2 text-[#6e6e6e]"><use href="#trash" /></svg>
      </div>
    </section>

    <!-- Color -->
    <section class="absolute right-2 top-[65px] h-[134px] w-[149px] border border-[#3a3a3a] bg-[#535353]">
      <div class="flex h-[7px] items-center justify-end gap-1 bg-[#434343] pr-[1px]">
        <svg class="size-[7px]"><use href="#fold" /></svg>
        <button aria-label="Закрыть цвет"><svg class="size-[7px]"><use href="#close" /></svg></button>
      </div>
      <div class="flex h-4 items-center bg-[#434343] pr-[3px]">
        <h2 class="flex h-full w-[28px] items-center gap-[2px] bg-[#535353] pl-[3px] font-bold"><svg class="h-2 w-1 shrink-0"><use href="#tabmark" /></svg>Цвет</h2>
        <span class="ml-[6px] text-[#b5b5b5]">Каталог цветов</span>
        <svg class="ml-auto size-[7px]"><use href="#menu" /></svg>
      </div>
      <div class="flex pl-[3px] pt-[4px]">
        <svg class="h-[69px] w-[31px]">
          <use href="#mini" x="0" y="2" /><use href="#swap" x="12" y="2" />
          <path d="M0 12h11v11H0z" fill="#fff" /><path d="M0 23L11 12" stroke="#c01f2c" stroke-width="1.500" />
          <use href="#stroke" x="7" y="19" />
          <path d="M3.500 41.500l3-1.500 3 1.500v4l-3 1.500-3-1.500zM3.500 41.500l3 1.500 3-1.500M6.500 43v4" fill="none" stroke="#bbb" />
          <path d="M15.500 39.500h7v7h-7z" stroke="#ccc" />
        </svg>
        <div class="flex flex-1 flex-col">
          <div class="flex h-4 items-center"><label for="cc" class="w-[10px]">C</label>
            <input id="cc" type="range" value="58" class="h-[7px] w-[63px] appearance-none bg-linear-to-r from-[#7a1010] to-black bg-[length:100%_2px] bg-top bg-no-repeat [&::-webkit-slider-thumb]:mt-[2px] [&::-webkit-slider-thumb]:h-[5px] [&::-webkit-slider-thumb]:w-[7px] [&::-webkit-slider-thumb]:appearance-none [&::-webkit-slider-thumb]:bg-[#ccc] [&::-webkit-slider-thumb]:[clip-path:polygon(50%_0,100%_50%,100%_100%,0_100%,0_50%)]" />
            <input aria-label="C, %" value="57,81" class="ml-[6px] h-3 w-5 bg-[#454545] pl-[2px]" /><span class="ml-[3px]">%</span></div>
          <div class="flex h-4 items-center"><label for="cm" class="w-[10px]">M</label>
            <input id="cm" type="range" value="46" class="h-[7px] w-[63px] appearance-none bg-linear-to-r from-[#0c3d26] to-black bg-[length:100%_2px] bg-top bg-no-repeat [&::-webkit-slider-thumb]:mt-[2px] [&::-webkit-slider-thumb]:h-[5px] [&::-webkit-slider-thumb]:w-[7px] [&::-webkit-slider-thumb]:appearance-none [&::-webkit-slider-thumb]:bg-[#ccc] [&::-webkit-slider-thumb]:[clip-path:polygon(50%_0,100%_50%,100%_100%,0_100%,0_50%)]" />
            <input aria-label="M, %" value="45,7" class="ml-[6px] h-3 w-5 bg-[#454545] pl-[2px]" /><span class="ml-[3px]">%</span></div>
          <div class="flex h-4 items-center"><label for="cy" class="w-[10px]">Y</label>
            <input id="cy" type="range" value="40" class="h-[7px] w-[63px] appearance-none bg-linear-to-r from-[#0a0a1a] to-black bg-[length:100%_2px] bg-top bg-no-repeat [&::-webkit-slider-thumb]:mt-[2px] [&::-webkit-slider-thumb]:h-[5px] [&::-webkit-slider-thumb]:w-[7px] [&::-webkit-slider-thumb]:appearance-none [&::-webkit-slider-thumb]:bg-[#ccc] [&::-webkit-slider-thumb]:[clip-path:polygon(50%_0,100%_50%,100%_100%,0_100%,0_50%)]" />
            <input aria-label="Y, %" value="41,02" class="ml-[6px] h-3 w-5 bg-[#454545] pl-[2px]" /><span class="ml-[3px]">%</span></div>
          <div class="flex h-4 items-center"><label for="ck" class="w-[10px]">K</label>
            <input id="ck" type="range" value="99" class="h-[7px] w-[63px] appearance-none bg-linear-to-r from-[#8a8a8a] to-black bg-[length:100%_2px] bg-top bg-no-repeat [&::-webkit-slider-thumb]:mt-[2px] [&::-webkit-slider-thumb]:h-[5px] [&::-webkit-slider-thumb]:w-[7px] [&::-webkit-slider-thumb]:appearance-none [&::-webkit-slider-thumb]:bg-[#ccc] [&::-webkit-slider-thumb]:[clip-path:polygon(50%_0,100%_50%,100%_100%,0_100%,0_50%)]" />
            <input aria-label="K, %" value="94,53" class="ml-[6px] h-3 w-5 bg-[#454545] pl-[2px]" /><span class="ml-[3px]">%</span></div>
        </div>
      </div>
      <div class="flex pl-[3px]">
        <svg class="h-[9px] w-2"><path d="M0 0h8v9H0z" fill="#fff" /><path d="M0 9L8 0" stroke="#c01f2c" stroke-width="1.500" /></svg>
        <span class="h-[9px] w-2 bg-black"></span><span class="h-[9px] w-2 bg-white"></span>
      </div>
      <div class="ml-[3px] mt-[6px] h-[13px] w-[134px] bg-[linear-gradient(to_bottom,#ffffff66,transparent_35%,transparent_60%,#000000b0),linear-gradient(to_right,#f04050,#f8f05a_15%,#12a84c_36%,#28b8e0_55%,#4650b0_67%,#c050b0_84%,#f04058)]"></div>
      <div class="mt-[6px] border-t border-[#444]"></div>
    </section>
  </main>

  <script>
    const NS = "http://www.w3.org/2000/svg";
    const CM = 26.7;

    function tick(parent, d, stroke) {
      const p = document.createElementNS(NS, "path");
      p.setAttribute("d", d);
      p.setAttribute("stroke", stroke);
      parent.appendChild(p);
    }

    function label(parent, x, y, text, fill) {
      const t = document.createElementNS(NS, "text");
      t.setAttribute("x", x);
      t.setAttribute("y", y);
      t.setAttribute("stroke", "none");
      if (fill) t.setAttribute("fill", fill);
      t.textContent = text;
      parent.appendChild(t);
    }

    // Horizontal ruler, the part under the floating panels has no numbers
    const rulerTop = document.getElementById("rulerTop");
    for (let i = 0; i < 30; i++) {
      const x = 16.5 + i * CM;
      tick(rulerTop, `M${x} 0V11`, "#6c6c6c");
      for (let m = 1; m < 10; m++) tick(rulerTop, `M${x + m * CM / 10} ${m === 5 ? 7 : 9}V11`, "#666");
      if (i < 19) label(rulerTop, x + 2, 8, String(230 - i * 10));
    }

    // Vertical ruler, digits stacked
    const rulerLeft = document.getElementById("rulerLeft");
    for (let i = 0; i < 19; i++) {
      const y = 24.5 + i * 26.6;
      tick(rulerLeft, `M0 ${y}H11`, "#6c6c6c");
      for (let m = 1; m < 10; m++) tick(rulerLeft, `M${m === 5 ? 7 : 9} ${y + m * 2.66}H11`, "#666");
      if (i === 18 || (i > 5 && i < 9)) continue;
      const digits = String(Math.abs(i * 10 - 10));
      for (let k = 0; k < digits.length; k++) {
        label(rulerLeft, 1, y - 3 - (digits.length - 1 - k) * 6, digits[k]);
      }
    }

    // Centimetre scale drawn on the artboard
    const scale = document.getElementById("scale");
    tick(scale, "M472.5 170.5H1140", "#999");
    for (let i = 0; i < 25; i++) {
      const x = 472.5 + i * 26.75;
      tick(scale, `M${x} 170V190`, "#bbb");
      for (let m = 1; m < 10; m++) tick(scale, `M${x + m * 2.675} 170V${m === 5 ? 181 : 178}`, "#ccc");
      if (i < 22) label(scale, x + 1, 188, String(i), "#111");
    }
  </script>
</body>

</html>
